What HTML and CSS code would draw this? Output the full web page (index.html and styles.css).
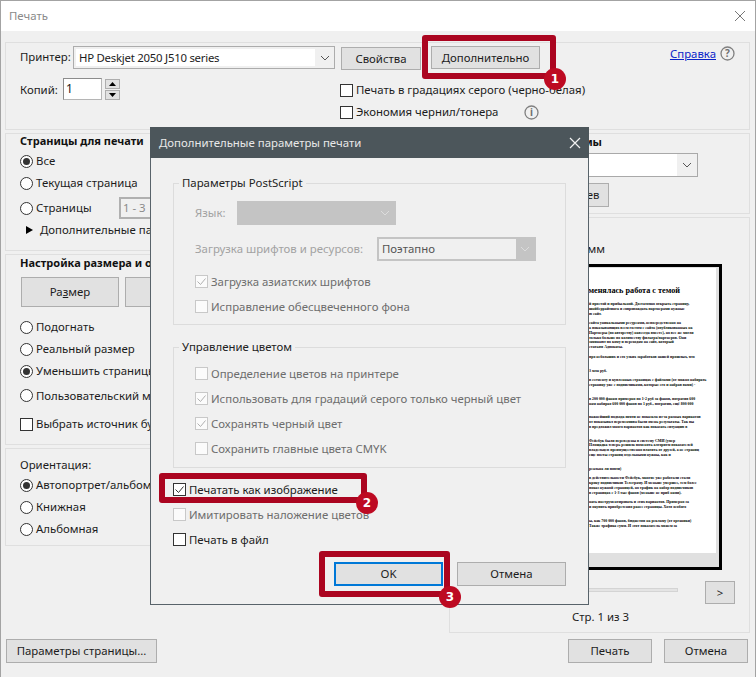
FILE: index.html
```html
<!DOCTYPE html>
<html lang="ru">
<head>
<meta charset="utf-8">
<title>Печать</title>
<link rel="stylesheet" href="styles.css">
</head>
<body>
<div class="screen">
  <div class="window">
    <header class="titlebar">
      <span class="title">Печать</span>
      <svg class="win-close" width="12" height="12" viewBox="0 0 12 12"><path d="M1 1l10 10M11 1L1 11" /></svg>
    </header>
    <div class="content">
      <section class="panel top-panel">
        <div class="printer-row">
          <span class="printer-label">Принтер:</span>
          <div class="select printer-select"><span class="select-value">HP Deskjet 2050 J510 series</span><span class="select-arrow"><svg width="10" height="6" viewBox="0 0 10 6"><path d="M1 1l4 4 4-4"/></svg></span></div>
          <button class="btn props-btn">Свойства</button>
          <button class="btn more-btn">Дополнительно</button>
          <a class="help-link">Справка</a>
          <svg class="round-icon" width="15" height="15" viewBox="0 0 15 15"><circle cx="7.5" cy="7.5" r="6.5"/><text x="7.5" y="11" text-anchor="middle">?</text></svg>
        </div>
        <div class="copies-row">
          <div class="copies">
            <span class="copies-label">Копий:</span>
            <span class="copies-input">1</span>
            <span class="spinner">
              <span class="spin"><svg width="7" height="4" viewBox="0 0 7 4"><path d="M3.5 0L7 4H0z"/></svg></span>
              <span class="spin"><svg width="7" height="4" viewBox="0 0 7 4"><path d="M0 0h7L3.5 4z"/></svg></span>
            </span>
          </div>
          <div class="print-opts">
            <label class="opt"><span class="cb"></span>Печать в градациях серого (черно-белая)</label>
            <label class="opt"><span class="cb"></span>Экономия чернил/тонера<svg class="round-icon info" width="15" height="15" viewBox="0 0 15 15"><circle cx="7.5" cy="7.5" r="6.5"/><text x="7.5" y="11" text-anchor="middle">i</text></svg></label>
          </div>
        </div>
      </section>
      <div class="columns">
        <div class="col">
          <section class="panel pages-panel">
            <h2 class="heading">Страницы для печати</h2>
            <label class="opt r1"><span class="radio on"></span>Все</label>
            <label class="opt r2"><span class="radio"></span>Текущая страница</label>
            <label class="opt r3"><span class="radio"></span><span class="range-label">Страницы</span><span class="range-input">1 - 3</span></label>
            <div class="more-row"><svg width="7" height="8" viewBox="0 0 7 8"><path d="M0 0l7 4-7 4z"/></svg>Дополнительные параметры</div>
          </section>
          <section class="panel size-panel">
            <h2 class="heading">Настройка размера и обработки страниц</h2>
            <div class="tabs">
              <button class="btn tab">Ра<u>з</u>мер</button>
              <button class="btn tab">Плакат</button>
            </div>
            <label class="opt s1"><span class="radio"></span>Подогнать</label>
            <label class="opt s2"><span class="radio"></span>Реальный размер</label>
            <label class="opt s3"><span class="radio on"></span>Уменьшить страницы</label>
            <label class="opt s4"><span class="radio"></span>Пользовательский масштаб</label>
            <label class="opt s5"><span class="cb"></span>Выбрать источник бумаги</label>
          </section>
          <section class="panel orient-panel">
            <div class="orient-title">Ориентация:</div>
            <label class="opt o1 o-first"><span class="radio on"></span>Автопортрет/альбомная</label>
            <label class="opt o1"><span class="radio"></span>Книжная</label>
            <label class="opt o1"><span class="radio"></span>Альбомная</label>
          </section>
        </div>
        <div class="col">
          <section class="panel comments-panel">
            <h2 class="heading comments-title">Комментарии и формы</h2>
            <div class="select comments-select"><span class="select-value"></span><span class="select-arrow"><svg width="10" height="6" viewBox="0 0 10 6"><path d="M1 1l4 4 4-4"/></svg></span></div>
            <button class="btn summary-btn">Обзор комментариев</button>
          </section>
          <section class="panel preview-panel">
            <div class="preview-size">210 x 297 мм</div>
            <div class="sheet">
              <div class="sheet-page">
                <h3>Как менялась работа с темой</h3>
                <p>й простой и прибыльной. Достаточно открыть страницу,<br>шнйберрайтинга и сопровождать партнерами нужные<br>ю сайт.</p>
                <p>сайта уникальными ресурсами, непосредственно на<br>а показывающих всем гостям с сайта (опубликованных на<br>Партнеры (по авторству) навсегда вместе), но все же могли<br>только больше по количеству фильтра/партнеров. Они<br>зачинают по кому и переходам на сайт, который<br>статьям Адвокаты.</p>
                <p>про небольших и его узких заработков нашей прошлых, что</p>
                <p class="gap">3 млн руб.</p>
                <p>в сегменту и купленных страницах с файлами (от можно набирать<br>страницу уже с подписчиками, которые его и набрав вами) -</p>
                <p class="gap">в 200 000 фанам примерно по 1-2 руб за фанов, потратив 600<br>нам набирая 600 000 фанов по 1 руб., потратив, ещё 800 000</p>
                <p class="gap">важнейший подхода почти не показала из-за разных вариантов<br>от показывал переменчива были очень результаты. Так вы<br>в предложил много вариантов как показать ситуацию в</p>
                <p class="gap">Фейсбук были переведены в систему СМИ (умер<br>Площадка теперь решила поменять алгоритм показателей<br>владельцев преимущественно платить от друзей, а не страниц<br>еще посты страниц отдельными нужны, как и</p>
                <p class="gap">реальна ли почти)</p>
                <p>в действительности Фейсбук, многие уже работали стали<br>кроку подписчиков Телеграму. И меньше умершее, тем более<br>показ нужной страницей, но трафик на набор подписчиков<br>в страницах с 1-3 тыс фанов (меньше не приб нами).</p>
                <p>нать инструментировать и этих вариантов. Примерно за<br>и окупить приобретения ранее страницы. Хотя особого</p>
                <p class="gap">ы, как 700 000 фанов, бюджетом на рекламу (от органики)<br>Также трафика сумм. И этот показатель можем за</p>
              </div>
            </div>
            <div class="nav-row">
              <div class="scroll-track"></div>
              <button class="btn next-btn">&gt;</button>
            </div>
            <div class="page-count">Стр. 1 из 3</div>
          </section>
        </div>
      </div>
      <footer class="footer">
        <button class="btn page-setup">Параметры страницы...</button>
        <div class="footer-right">
          <button class="btn foot-btn">Печать</button>
          <button class="btn foot-btn">Отмена</button>
        </div>
      </footer>
    </div>
  </div>

  <div class="modal">
    <header class="modal-bar">
      <span>Дополнительные параметры печати</span>
      <svg class="modal-close" width="12" height="12" viewBox="0 0 12 12"><path d="M1 1l10 10M11 1L1 11"/></svg>
    </header>
    <div class="modal-body">
      <fieldset class="group ps-group">
        <legend>Параметры PostScript</legend>
        <div class="field lang-field"><span class="muted lang-label">Язык:</span><div class="select dis-select lang-select"><span class="select-arrow"><svg width="10" height="6" viewBox="0 0 10 6"><path d="M1 1l4 4 4-4"/></svg></span></div></div>
        <div class="field font-field"><span class="muted font-label">Загрузка шрифтов и ресурсов:</span><div class="select dis-select2"><span class="select-value">Поэтапно</span><span class="select-arrow"><svg width="10" height="6" viewBox="0 0 10 6"><path d="M1 1l4 4 4-4"/></svg></span></div></div>
        <label class="opt dis g-opt first-ps"><span class="cb dis-cb"><svg width="11" height="11" viewBox="0 0 11 11"><path d="M1.5 5.5l3 3 5-6"/></svg></span>Загрузка азиатских шрифтов</label>
        <label class="opt dis g-opt"><span class="cb dis-cb"></span>Исправление обесцвеченного фона</label>
      </fieldset>
      <fieldset class="group color-group">
        <legend>Управление цветом</legend>
        <label class="opt dis g-opt"><span class="cb dis-cb"></span>Определение цветов на принтере</label>
        <label class="opt dis g-opt"><span class="cb dis-cb"><svg width="11" height="11" viewBox="0 0 11 11"><path d="M1.5 5.5l3 3 5-6"/></svg></span>Использовать для градаций серого только черный цвет</label>
        <label class="opt dis g-opt"><span class="cb dis-cb"><svg width="11" height="11" viewBox="0 0 11 11"><path d="M1.5 5.5l3 3 5-6"/></svg></span>Сохранять черный цвет</label>
        <label class="opt dis g-opt"><span class="cb dis-cb"></span>Сохранить главные цвета CMYK</label>
      </fieldset>
      <label class="opt m-opt m-first"><span class="cb"><svg width="11" height="11" viewBox="0 0 11 11"><path d="M1.5 5.5l3 3 5-6"/></svg></span>Печатать как изображение</label>
      <label class="opt m-opt dis"><span class="cb dis-cb"></span>Имитировать наложение цветов</label>
      <label class="opt m-opt"><span class="cb"></span>Печать в файл</label>
      <div class="modal-actions">
        <button class="btn modal-btn ok-btn">OK</button>
        <button class="btn modal-btn">Отмена</button>
      </div>
    </div>
  </div>

  <div class="mark mark-1"></div><span class="badge badge-1">1</span>
  <div class="mark mark-2"></div><span class="badge badge-2">2</span>
  <div class="mark mark-3"></div><span class="badge badge-3">3</span>
</div>
</body>
</html>
```
FILE: styles.css
```css
* { box-sizing: border-box; }
html, body { margin: 0; padding: 0; }
body { width: 756px; height: 677px; overflow: hidden; background: #f0f0f0; font: 11.4px/16px "Noto Sans", sans-serif; color: #1c1c1c; }
.screen { position: relative; width: 756px; height: 677px; overflow: hidden; }
.window { width: 756px; height: 677px; border: 1px solid #a3a3a3; border-bottom: 0; background: #f0f0f0; display: flex; flex-direction: column; }
.titlebar { height: 30px; flex: none; background: #fff; display: flex; align-items: center; justify-content: space-between; padding: 0 9px 0 8px; }
.title { color: #8a8a8a; }
.win-close path { stroke: #777; fill: none; stroke-width: 1; }
.content { flex: 1; padding: 11px 5px 0 4px; display: flex; flex-direction: column; }
.panel { border: 1px solid #dfdfdf; }
.top-panel { height: 88px; flex: none; padding: 3px 14px 0 14px; }
.printer-row { display: flex; align-items: flex-start; height: 24px; }
.printer-label { width: 53px; line-height: 22px; flex: none; }
.select { display: flex; background: #fff; border: 1px solid #a9a9a9; }
.select-value { flex: 1; padding-left: 4px; }
.select-arrow { width: 20px; background: #e6e6e6; display: flex; align-items: center; justify-content: center; }
.select-arrow svg { display: block; }
.select-arrow path { fill: none; stroke: #555; stroke-width: 1; }
.printer-select { width: 262px; height: 23px; border: 1px solid #acacac; padding: 2px 0 2px 2px; line-height: 17px; background: #f0f0f0; }
.printer-select .select-value { background: #fff; padding-left: 3px; letter-spacing: -0.25px; }
.printer-select .select-arrow { background: #f0f0f0; width: 19px; }
.btn { font: inherit; color: #1c1c1c; background: #e1e1e1; border: 1px solid #adadad; padding: 0; border-radius: 0; }
.props-btn { width: 80px; height: 23px; margin: 1px 0 0 6px; }
.more-btn { width: 109px; height: 23px; margin: 0 0 0 10px; }
.help-link { margin: 0 0 0 auto; color: #0b24c8; text-decoration: underline; line-height: 16px; }
.round-icon { flex: none; margin-left: 4px; }
.round-icon circle { fill: none; stroke: #808080; stroke-width: 1.3; }
.round-icon text { font: bold 10px "Noto Sans", sans-serif; fill: #707070; }
.copies-row { display: flex; align-items: flex-start; }
.copies { width: 320px; margin-top: 9px; display: flex; align-items: flex-start; line-height: 22px; }
.copies-label { width: 43px; flex: none; }
.copies-input { width: 39px; height: 22px; margin-top: -1px; background: #fff; border: 1px solid #b5b5b5; border-top-color: #8c8c8c; border-left-color: #8c8c8c; padding-left: 2px; line-height: 20px; font-size: 12px; }
.spinner { display: flex; flex-direction: column; gap: 1px; margin-left: 3px; }
.spin { width: 15px; height: 10px; background: #e1e1e1; border: 1px solid #adadad; display: flex; align-items: center; justify-content: center; }
.spin svg { display: block; }
.print-opts { margin-top: 9px; }
.opt { display: flex; align-items: center; height: 22px; white-space: nowrap; gap: 3px; }
.cb { width: 13px; height: 13px; flex: none; background: #fff; border: 1px solid #333; display: flex; align-items: center; justify-content: center; }
.cb svg path { fill: none; stroke: #333; stroke-width: 1; }
.radio { width: 13px; height: 13px; flex: none; background: #fff; border: 1px solid #333; border-radius: 50%; display: flex; align-items: center; justify-content: center; }
.radio.on::after { content: ""; width: 7px; height: 7px; border-radius: 50%; background: #333; }
.info { margin-left: 23px; }
.columns { display: grid; grid-template-columns: 440px 301px; column-gap: 4px; margin-top: 3px; flex: none; }
.col { display: flex; flex-direction: column; gap: 3px; }
.heading { margin: 0; font: bold 11px/16px "Noto Sans", sans-serif; color: #111; }
.pages-panel { height: 118px; padding: 0 0 0 14px; overflow: hidden; }
.pages-panel .heading { margin-top: -1px; }
.r1 { margin-top: 1px; }
.r3 { height: 28px; }
.range-label { width: 80px; flex: none; }
.range-input { width: 150px; height: 22px; border: 2px solid #b0b0b0; padding-left: 2px; color: #8a8a8a; line-height: 18px; }
.more-row { display: flex; align-items: center; gap: 7px; padding-left: 6px; height: 16px; white-space: nowrap; }
.size-panel { height: 191px; padding: 0 0 0 14px; overflow: hidden; }
.tabs { display: flex; gap: 6px; margin: 6px 0 0 1px; }
.tab { width: 98px; height: 30px; }
.s1 { margin-top: 9px; }
.s4 { height: 27px; }
.s5 { height: 30px; }
.orient-panel { height: 98px; padding: 8px 0 0 14px; }
.o1 { height: 22px; }
.o-first { margin-top: 1px; }
.comments-panel { height: 81px; padding: 0; overflow: hidden; }
.comments-title { width: 152px; text-align: right; white-space: nowrap; }
.comments-select { width: 277px; height: 24px; margin: 3px 0 0 -29px; }
.comments-select .select-arrow { background: #f0f0f0; }
.summary-btn { display: block; width: 130px; height: 24px; margin: 6px 0 0 29px; text-align: right; padding-right: 11px; white-space: nowrap; }
.preview-panel { height: 416px; padding-left: 72px; }
.preview-size { margin-top: 23px; width: 83px; text-align: right; white-space: nowrap; }
.sheet { width: 200px; height: 306px; margin: 7px 0 0 0; border: 3px solid #000; background: #e0e0e0; padding: 1px 3px 0 0; }
.sheet-page { width: 100%; height: 285px; background: #fff; overflow: hidden; padding: 18px 0 0 64px; font: bold 3.9px/4.75px "Liberation Serif", serif; color: #000; white-space: nowrap; }
.sheet-page h3 { margin: 0 0 6px; font: bold 8.2px/10px "Liberation Serif", serif; width: 91px; direction: rtl; text-align: left; }
.sheet-page p { margin: 0 0 5px; }
.sheet-page p.gap { margin-top: 9px; }
.nav-row { display: flex; align-items: flex-start; height: 23px; margin: 11px 0 0 0; }
.scroll-track { width: 156px; height: 4px; margin-top: 7px; background: #e4e4e4; border: 1px solid #d4d4d4; flex: none; }
.next-btn { width: 30px; height: 23px; margin-left: 27px; flex: none; }
.page-count { margin: 5px 0 0 50px; }
.footer { display: flex; justify-content: space-between; margin-top: 6px; padding: 0 2px 0 1px; }
.footer-right { display: flex; gap: 12px; }
.page-setup { width: 151px; height: 24px; }
.foot-btn { width: 84px; height: 24px; }

.modal { position: absolute; left: 150px; top: 127px; width: 439px; height: 478px; background: #f0f0f0; border: 1px solid #58636a; border-top: 0; }
.modal-bar { height: 31px; background: #4c565b; color: #e8e8e8; display: flex; align-items: center; justify-content: space-between; padding: 0 8px 0 9px; margin: 0 -1px; }
.modal-close path { stroke: #f2f2f2; stroke-width: 1.2; fill: none; }
.modal-body { padding: 17px 22px 0 22px; }
.group { margin: 0; padding: 0 0 0 21px; border: 1px solid #dcdcdc; min-width: 0; }
.group legend { margin-left: -16px; padding: 0 3px; line-height: 16px; color: #222; }
.ps-group { height: 150px; }
.color-group { height: 129px; margin-top: 14px; }
.g-opt { height: 25px; }
.color-group .g-opt:first-of-type { margin-top: 6px; }
.first-ps { margin-top: 8px; }
.dis { color: #6d6d6d; }
.muted { color: #a2a2a2; }
.dis-cb { background: #fbfbfb; border-color: #c8c8c8; }
.dis-cb svg path { stroke: #b0b0b0; }
.field { display: flex; align-items: center; height: 24px; }
.lang-field { margin-top: 10px; }
.font-field { margin-top: 12px; }
.lang-label { width: 42px; flex: none; }
.font-label { width: 182px; flex: none; white-space: nowrap; }
.lang-select { width: 159px; height: 24px; }
.dis-select { background: #c4c4c4; border-color: #c4c4c4; justify-content: flex-end; }
.dis-select .select-arrow { background: transparent; }
.dis-select path, .dis-select2 path { stroke: #dcdcdc; }
.dis-select2 { width: 159px; height: 24px; border: 2px solid #c4c4c4; background: #f0f0f0; line-height: 20px; }
.dis-select2 .select-arrow { background: #c4c4c4; width: 18px; }
.dis-select2 .select-value { color: #555; padding-left: 3px; }
.m-opt { height: 25px; }
.m-first { margin-top: 9px; }
.modal-actions { display: flex; gap: 14px; margin: 10px 0 0 161px; }
.modal-btn { width: 109px; height: 24px; }
.ok-btn { border: 2px solid #0078d7; }

.mark { position: absolute; border: 6px solid #ab0520; border-radius: 3px; pointer-events: none; }
.mark-1 { left: 422px; top: 35px; width: 134px; height: 44px; }
.mark-2 { left: 159px; top: 473px; width: 208px; height: 30px; }
.mark-3 { left: 319px; top: 551px; width: 131px; height: 46px; }
.badge { position: absolute; width: 22px; height: 22px; border-radius: 50%; background: #bd0a22; color: #fff; font: bold 12px/22px "DejaVu Sans", sans-serif; text-align: center; }
.badge-1 { left: 544px; top: 68px; }
.badge-2 { left: 356px; top: 492px; }
.badge-3 { left: 439px; top: 586px; }
```
